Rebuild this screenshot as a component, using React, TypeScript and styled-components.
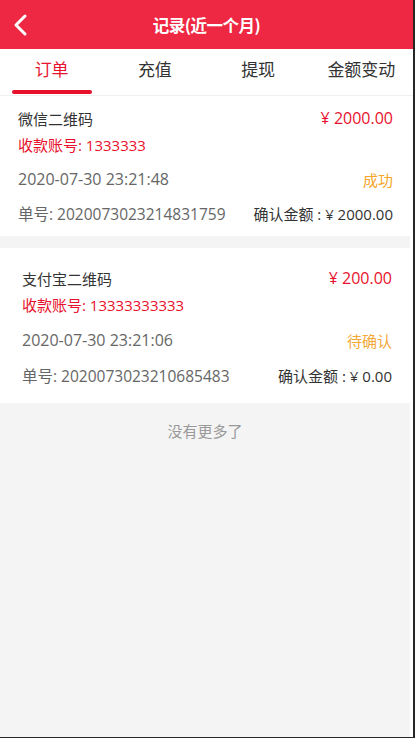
import React, { useState } from 'react';
import styled, { createGlobalStyle } from 'styled-components';

const GlobalStyle = createGlobalStyle`
	html, body {
		margin: 0;
		padding: 0;
		background: #262626;
	}
	* {
		box-sizing: border-box;
	}
	body {
		font-family: "Open Sans", "Noto Sans CJK SC", sans-serif;
	}
`;

const Page = styled.div`
	width: 413px;
	height: 737px;
	background: #f4f4f4;
	display: flex;
	flex-direction: column;
	overflow: hidden;
`;

const Header = styled.header`
	height: 49px;
	background: #ee2842;
	display: flex;
	align-items: center;
	justify-content: center;
	position: relative;
	flex-shrink: 0;
`;

const BackButton = styled.button`
	position: absolute;
	left: 8px;
	top: 11px;
	width: 26px;
	height: 28px;
	padding: 0;
	border: none;
	background: none;
	display: flex;
	align-items: center;
	justify-content: center;
`;

const Title = styled.h1`
	margin: 0;
	color: #fff;
	font-family: "Noto Sans CJK SC", sans-serif;
	font-size: 16.5px;
	font-weight: 700;
	letter-spacing: -0.5px;
`;

const TabBar = styled.nav`
	display: flex;
	background: #fff;
	border-bottom: 1px solid #efefef;
	flex-shrink: 0;
`;

const Tab = styled.div<{ $active?: boolean }>`
	flex: 1;
	height: 46px;
	padding-top: 8px;
	display: flex;
	flex-direction: column;
	align-items: center;
	font-size: 17px;
	line-height: 26px;
	color: ${(p) => (p.$active ? '#e8152f' : '#333')};
	cursor: pointer;
`;

const Underline = styled.span<{ $active?: boolean }>`
	margin-top: 7px;
	width: 80px;
	height: 4px;
	border-radius: 2px;
	background: ${(p) => (p.$active ? '#e8112d' : 'transparent')};
`;

const Content = styled.main`
	flex: 1;
	border-right: 3px solid #fff;
	display: flex;
	flex-direction: column;
	gap: 12px;
`;

const Card = styled.section<{ $pad: string }>`
	background: #fff;
	padding: ${(p) => p.$pad};
	display: flex;
	flex-direction: column;
`;

const Row = styled.div<{ $space?: number }>`
	display: flex;
	justify-content: space-between;
	align-items: center;
	height: 26px;
	margin-top: ${(p) => p.$space || 0}px;
	white-space: nowrap;
`;

const Name = styled.span`
	font-size: 15px;
	color: #333;
`;

const Amount = styled.span`
	font-size: 16px;
	color: #e8112d;
`;

const Account = styled.span`
	font-size: 15px;
	color: #e8112d;
`;

const Time = styled.span`
	font-size: 16px;
	color: #666;
`;

const OrderNo = styled.span`
	font-size: 15.5px;
	color: #666;
`;

const Status = styled.span<{ $tone: 'done' | 'wait' }>`
	font-size: 15px;
	color: ${(p) => (p.$tone === 'done' ? '#f5a52a' : '#f3a838')};
`;

const Confirmed = styled.span`
	font-size: 15px;
	color: #333;
`;

const Footer = styled.div`
	margin-top: 4px;
	text-align: center;
	font-size: 15px;
	line-height: 24px;
	color: #999;
`;

const orders = [
	{
		name: '微信二维码',
		amount: '¥ 2000.00',
		account: '1333333',
		time: '2020-07-30 23:21:48',
		status: '成功',
		tone: 'done' as const,
		no: '2020073023214831759',
		confirmed: '¥ 2000.00',
		pad: '9px 17px 10px 18px',
		space: [9, 8],
	},
	{
		name: '支付宝二维码',
		amount: '¥ 200.00',
		account: '13333333333',
		time: '2020-07-30 23:21:06',
		status: '待确认',
		tone: 'wait' as const,
		no: '2020073023210685483',
		confirmed: '¥ 0.00',
		pad: '17px 18px 15px 22px',
		space: [10, 9],
	},
];

const tabs = ['订单', '充值', '提现', '金额变动'];

const App = () => {
	const [active, setActive] = useState(0);

	return (
		<>
			<GlobalStyle />
			<Page>
				<Header>
					<BackButton aria-label='返回'>
						<svg width='16' height='24' viewBox='0 0 16 24'>
							<path d='M12 3 L3 12 L12 21' fill='none' stroke='#fff' strokeWidth='3' strokeLinecap='round' strokeLinejoin='round' />
						</svg>
					</BackButton>
					<Title>记录(近一个月)</Title>
				</Header>
				<TabBar>
					{tabs.map((t, i) => (
						<Tab key={t} $active={i === active} onClick={() => setActive(i)}>
							{t}
							<Underline $active={i === active} />
						</Tab>
					))}
				</TabBar>
				<Content>
					{orders.map((o) => (
						<Card key={o.no} $pad={o.pad}>
							<Row>
								<Name>{o.name}</Name>
								<Amount>{o.amount}</Amount>
							</Row>
							<Row>
								<Account>收款账号: {o.account}</Account>
							</Row>
							<Row $space={o.space[0]}>
								<Time>{o.time}</Time>
								<Status $tone={o.tone}>{o.status}</Status>
							</Row>
							<Row $space={o.space[1]}>
								<OrderNo>单号: {o.no}</OrderNo>
								<Confirmed>确认金额 : {o.confirmed}</Confirmed>
							</Row>
						</Card>
					))}
					<Footer>没有更多了</Footer>
				</Content>
			</Page>
		</>
	);
};

export default App;
